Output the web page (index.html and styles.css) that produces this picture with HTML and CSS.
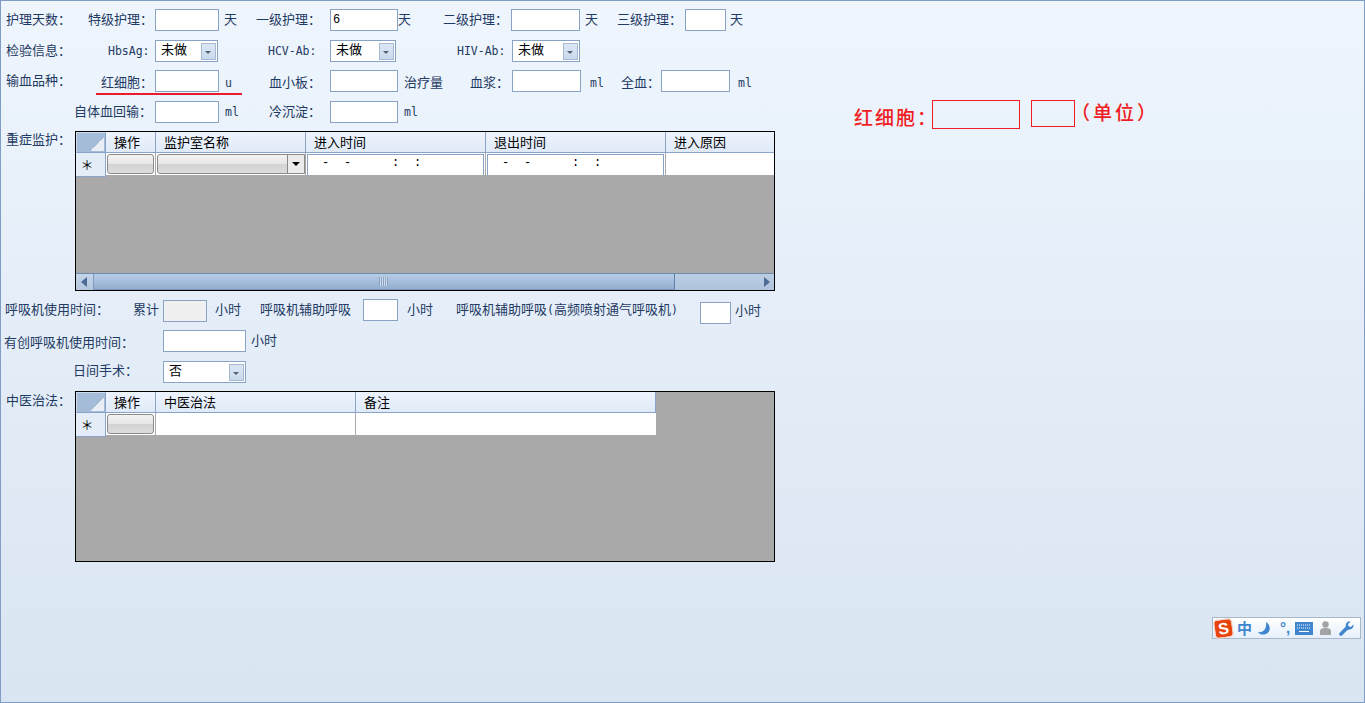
FILE: index.html
```html
<!DOCTYPE html>
<html lang="zh-CN">
<head>
    <meta charset="UTF-8">
    <title>护理信息</title>
    <link rel="stylesheet" href="styles.css">
</head>
<body>
<div class="page">
    <form class="form">
        <div class="row row-care">
            <span>护理天数：</span>
            <span>特级护理：</span><input class="box" type="text"><span class="unit">天</span>
            <span>一级护理：</span><input class="box" type="text" value="6"><span class="unit tight">天</span>
            <span>二级护理：</span><input class="box" type="text"><span class="unit">天</span>
            <span>三级护理：</span><input class="box" type="text"><span class="unit near">天</span>
        </div>
        <div class="row row-check">
            <span>检验信息：</span>
            <span><b class="en">HbsAg:</b></span><div class="combo">未做<i class="drop"></i></div><span></span>
            <span><b class="en">HCV-Ab:</b></span><div class="combo">未做<i class="drop"></i></div><span></span>
            <span><b class="en">HIV-Ab:</b></span><div class="combo">未做<i class="drop"></i></div>
        </div>
        <div class="row row-blood">
            <span class="sect">输血品种：</span>
            <span>红细胞：</span><input class="box" type="text"><span class="unit wide"><b class="en">u</b></span>
            <span>血小板：</span><input class="box" type="text"><span class="unit wide">治疗量</span>
            <span>血浆：</span><input class="box" type="text"><span class="unit far"><b class="en">ml</b></span>
            <span>全血：</span><input class="box" type="text"><span class="unit mid"><b class="en">ml</b></span>
        </div>
        <div class="row row-blood2">
            <span></span>
            <span>自体血回输：</span><input class="box" type="text"><span class="unit wide"><b class="en">ml</b></span>
            <span>冷沉淀：</span><input class="box" type="text"><span class="unit wide"><b class="en">ml</b></span>
        </div>

        <div class="grid-row grid-row-icu">
            <span class="sect">重症监护：</span>
            <div class="grid grid-icu">
                <div class="line head">
                    <div class="corner"></div><div>操作</div><div>监护室名称</div><div>进入时间</div><div>退出时间</div><div>进入原因</div>
                </div>
                <div class="line body">
                    <div class="star">＊</div>
                    <div class="cell-btn"><button class="btn" type="button"></button></div>
                    <div class="cell-btn"><div class="btn btn-combo"><i class="drop-black"></i></div></div>
                    <div class="cell-date"><div class="date"><span>-</span><span>-</span><span class="time">:</span><span>:</span></div></div>
                    <div class="cell-date"><div class="date"><span>-</span><span>-</span><span class="time">:</span><span>:</span></div></div>
                    <div></div>
                </div>
                <div class="fill"></div>
                <div class="hscroll">
                    <div class="arrow arrow-left"></div>
                    <div class="thumb"><i class="grip"></i></div>
                    <div class="track"><i class="arrow-right"></i></div>
                </div>
            </div>
        </div>

        <div class="row row-vent">
            <span>呼吸机使用时间：</span>
            <span>累计</span><input class="box off" type="text" disabled><span class="unit mid">小时</span>
            <span>呼吸机辅助呼吸</span><input class="box" type="text"><span class="unit far">小时</span>
            <span>呼吸机辅助呼吸<b class="en">(</b>高频喷射通气呼吸机<b class="en">)</b></span><input class="box low" type="text"><span class="unit near">小时</span>
        </div>
        <div class="row row-vent2">
            <span>有创呼吸机使用时间：</span><input class="box" type="text"><span class="unit">小时</span>
        </div>
        <div class="row row-day">
            <span></span>
            <span class="day-label">日间手术：</span><div class="combo">否<i class="drop"></i></div>
        </div>

        <div class="grid-row grid-row-tcm">
            <span class="sect">中医治法：</span>
            <div class="grid grid-tcm">
                <div class="line head">
                    <div class="corner"></div><div>操作</div><div>中医治法</div><div>备注</div>
                </div>
                <div class="line body">
                    <div class="star">＊</div>
                    <div class="cell-btn"><button class="btn" type="button"></button></div>
                    <div></div>
                    <div></div>
                </div>
                <div class="fill"></div>
            </div>
        </div>
    </form>

    <!-- red marks lying over the form -->
    <div class="red-line"></div>
    <div class="note">
        <span class="note-label">红细胞：</span>
        <div class="note-box"></div>
        <div class="note-box note-box-small"></div>
        <span class="note-unit">（单位）</span>
    </div>

    <div class="ime">
        <span class="ime-logo">S</span>
        <span class="ime-zh">中</span>
        <svg class="ime-moon" width="13" height="13" viewBox="0 0 13 13"><path d="M8 0C13 3 13 10 8 12 5 13 2 13 0 10 3 10.500 6 9.500 7 7 8 5 8.500 2 8 0z" fill="#3f86cf"/></svg>
        <span class="ime-punct">°,</span>
        <svg class="ime-keys" width="18" height="13" viewBox="0 0 18 13"><rect width="18" height="13" fill="#3f86cf"/><path d="M2 3h14M2 6h14" stroke="#fff" stroke-dasharray="1 1"/><path d="M4 9.500h10" stroke="#fff"/></svg>
        <svg class="ime-user" width="11" height="14" viewBox="0 0 11 14"><circle cx="5.500" cy="3.500" r="3.200" fill="#a3a3a3"/><path d="M0 14V10c0-2 2-3 5.500-3s5.500 1 5.500 3v4z" fill="#a3a3a3"/></svg>
        <svg class="ime-tool" width="15" height="15" viewBox="0 0 15 15"><path d="M2 13 8 7" stroke="#3f86cf" stroke-width="3.600" stroke-linecap="round"/><path d="M14.500 3.500 11.800 6 9.500 5.200 9 3l2.500-2.600C8.500 0 6.200 2.500 6.800 5.500l1.500 3c3.500 1 6.800-1.300 6.200-5z" fill="#3f86cf"/></svg>
    </div>
</div>
</body>
</html>
```

FILE: styles.css
```css
*{
    box-sizing: border-box;
}
html, body{
    margin: 0;
    height: 100%;
}
body{
    font-family: "Noto Sans CJK SC", "Liberation Sans", sans-serif;
    font-size: 13px;
    color: #1f3a63;
    overflow: hidden;
}
.page{
    position: relative;
    height: 703px;
    border: 1px solid #7f9dc5;
    background: linear-gradient(#eef5fd, #d9e5f2);
}
.form{
    padding: 8px 0 0 5px;
}
.en{
    font-family: "DejaVu Sans Mono", monospace;
    font-size: 11.5px;
    font-weight: normal;
}

/* form rows */
.row{
    display: grid;
    align-items: start;
    line-height: 20px;
    white-space: nowrap;
}
.row-care{
    height: 31px;
    grid-template-columns: 82px 67px 64px 37px 74px 68px 45px 68px 69px 37px 68px 41px auto;
}
.row-check{
    height: 30px;
    grid-template-columns: 102px 47px 63px 50px 62px 66px 61px 55px 68px;
}
.row-blood{
    height: 31px;
    grid-template-columns: 95px 54px 64px 50px 61px 68px 72px 42px 69px 40px 40px 69px auto;
}
.row-blood > span{
    padding-top: 2px;
}
.row-blood > .sect{
    padding-top: 0;
}
.row-blood2{
    height: 30px;
    grid-template-columns: 68px 81px 64px 50px 61px 68px auto;
}
.row-vent{
    height: 31px;
    margin-left: -1px;
    grid-template-columns: 128px 30px 44px 53px 103px 35px 58px 244px 31px auto;
}
.row-vent .off{
    margin-top: 1px;
}
.row-vent .low{
    margin-top: 3px;
}
.row-vent .unit.near{
    padding-top: 1px;
}
.row-vent2{
    height: 31px;
    margin-left: -2px;
    grid-template-columns: 159px 83px auto;
}
.row-vent2 > span:first-child{
    padding-top: 2px;
}
.row-day{
    height: 30px;
    grid-template-columns: 67px 90px 83px;
}
.day-label{
    margin-top: -1px;
}
.unit{
    padding-left: 5px;
}
.unit.tight{
    padding-left: 0;
}
.unit.near{
    padding-left: 4px;
}
.unit.wide{
    padding-left: 6px;
}
.unit.mid{
    padding-left: 8px;
}
.unit.far{
    padding-left: 9px;
}

/* inputs */
.box, .combo{
    display: block;
    width: 100%;
    height: 22px;
    margin: 0;
    border: 1px solid #89a3c4;
    border-radius: 0;
    background: #fff;
    font-family: "Liberation Mono", monospace;
    font-size: 12px;
    color: #000;
    outline: none;
}
.box{
    padding: 0 2px;
}
.off{
    background: #f0f0f0;
}
.combo{
    position: relative;
    padding-left: 5px;
    font-family: "Noto Sans CJK SC", sans-serif;
    font-size: 13px;
    line-height: 15px;
}
.drop{
    position: absolute;
    top: 2px;
    right: 1px;
    width: 15px;
    height: 17px;
    border: 1px solid #a7b9d0;
    background: linear-gradient(#dbe6f4, #c9daee);
}
.drop::after{
    content: "";
    position: absolute;
    top: 7px;
    left: 3px;
    border: 3px solid transparent;
    border-top: 3px solid #55606e;
    border-bottom: 0;
}

/* data grids */
.grid-row{
    display: grid;
    grid-template-columns: 69px 700px;
    line-height: 16px;
}
.grid-row-icu{
    margin-bottom: 8px;
}
.grid-row-tcm .sect{
    padding-top: 1px;
}
.grid{
    display: flex;
    flex-direction: column;
    border: 1px solid #000;
    background: #a9a9a9;
    color: #000;
}
.grid-icu{
    height: 160px;
}
.grid-tcm{
    height: 171px;
}
.line{
    display: grid;
    flex: none;
}
.grid-icu .line{
    grid-template-columns: 30px 50px 150px 180px 180px 108px;
}
.grid-tcm .line{
    width: 580px;
    grid-template-columns: 30px 50px 200px 300px;
}
.head{
    height: 21px;
    line-height: 19px;
    background: linear-gradient(#eef4fe, #dfe9f7);
}
.head > div{
    padding-left: 8px;
    border-right: 1px solid #8aa4c8;
    border-bottom: 1px solid #8aa4c8;
}
.head > div:last-child{
    border-right: 0;
}
.grid-tcm .head > div:last-child{
    border-right: 1px solid #8aa4c8;
}
.head > .corner{
    border: 1px solid #cfdcee;
    border-right: 1px solid #8aa4c8;
    border-bottom: 1px solid #8aa4c8;
    background: linear-gradient(to bottom right, transparent 50%, #e9eef5 50%) no-repeat right 1px bottom 1px / 14px 14px, #a5bcd8;
}
.body{
    height: 22px;
    background: #fff;
}
.body > div{
    border-right: 1px solid #a9a9a9;
}
.body > div:last-child{
    border-right: 0;
}
.body > .star{
    padding-right: 7px;
    background: #e4ecf8;
    border-right: 1px solid #8aa4c8;
    border-bottom: 1px solid #8aa4c8;
    line-height: 23px;
    text-align: center;
}
.cell-btn{
    padding: 1px 0 1px 1px;
}
.btn{
    display: block;
    position: relative;
    width: 100%;
    height: 20px;
    padding: 0;
    border: 1px solid #8b8b8b;
    border-radius: 3px;
    background: linear-gradient(#f3f3f3, #e6e6e6 50%, #d2d2d2 50%, #dcdcdc);
}
.body .cell-btn:nth-child(2){
    padding-right: 1px;
}
.btn-combo{
    border-radius: 3px 0 0 3px;
}
.drop-black{
    position: absolute;
    top: 0;
    right: 0;
    width: 17px;
    height: 18px;
    border-left: 1px solid #888;
    background: #ececec;
}
.drop-black::after{
    content: "";
    position: absolute;
    top: 7px;
    left: 4px;
    border: 4px solid transparent;
    border-top: 4px solid #000;
    border-bottom: 0;
}
.cell-date{
    padding: 1px 1px 0;
}
.date{
    display: flex;
    height: 21px;
    padding-left: 14px;
    border: 1px solid #89a3c4;
    border-bottom: 0;
    font-family: "Liberation Mono", monospace;
    font-size: 12px;
    line-height: 17px;
}
.date span{
    width: 22px;
}
.date .time{
    margin-left: 26px;
}
.fill{
    flex: 1;
}
.hscroll{
    display: flex;
    flex: none;
    height: 17px;
    border-top: 1px solid #6d8aab;
}
.arrow{
    position: relative;
    width: 18px;
    border-right: 1px solid #7f9cc0;
    background: linear-gradient(#c5d6ea, #b2c6de);
}
.arrow-left::after{
    content: "";
    position: absolute;
    top: 3px;
    left: 5px;
    border: 5px solid transparent;
    border-right: 6px solid #4f6a95;
    border-left: 0;
}
.thumb{
    position: relative;
    width: 581px;
    border-right: 1px solid #5f80a8;
    border-bottom: 1px solid #7a97bb;
    background: linear-gradient(#b6cde8, #93aecf);
}
.grip{
    position: absolute;
    top: 3px;
    left: 285px;
    width: 9px;
    height: 9px;
    background: repeating-linear-gradient(to right, #8ba3c2 0 1px, #cfdcec 1px 2px);
}
.track{
    position: relative;
    flex: 1;
    background: linear-gradient(#bccee4, #aec3dc);
}
.arrow-right{
    position: absolute;
    top: 3px;
    right: 4px;
    border: 5px solid transparent;
    border-left: 6px solid #4f6a95;
    border-right: 0;
}

/* red marks */
.red-line{
    position: absolute;
    top: 92px;
    left: 95px;
    width: 146px;
    height: 2px;
    background: #ea1c2c;
}
.note{
    position: absolute;
    top: 99px;
    left: 853px;
    display: flex;
    align-items: flex-start;
    color: #f01d24;
    font-size: 19px;
    font-weight: 500;
    white-space: nowrap;
}
.note-label{
    width: 78px;
    letter-spacing: 2px;
    line-height: 34px;
}
.note-box{
    flex: none;
    width: 88px;
    height: 29px;
    border: 1px solid #f01d24;
}
.note-box-small{
    width: 44px;
    height: 27px;
    margin-left: 11px;
}
.note-unit{
    margin-left: -4px;
    letter-spacing: 3px;
    line-height: 24px;
}

/* input method bar */
.ime{
    position: absolute;
    top: 616px;
    left: 1211px;
    display: flex;
    align-items: center;
    width: 149px;
    height: 22px;
    border: 1px solid #a8b8c8;
    background: linear-gradient(#fff, #e6f0fb);
}
.ime-logo{
    width: 17px;
    height: 17px;
    margin-left: 2px;
    border-radius: 3px;
    outline: 1px solid #f4d2c4;
    background: #e8430f;
    color: #fff;
    font-family: "Liberation Sans", sans-serif;
    font-size: 16px;
    font-weight: bold;
    line-height: 17px;
    text-align: center;
    transform: rotate(-8deg);
}
.ime-zh{
    margin-left: 5px;
    color: #3f86cf;
    font-size: 15px;
    font-weight: bold;
    line-height: 20px;
}
.ime-moon{
    margin-left: 6px;
}
.ime-punct{
    width: 14px;
    margin-left: 9px;
    color: #3f86cf;
    font-family: "Liberation Sans", sans-serif;
    font-size: 15px;
    font-weight: bold;
    line-height: 20px;
}
.ime-keys{
    margin-left: 1px;
}
.ime-user{
    margin-left: 7px;
}
.ime-tool{
    margin-left: 8px;
}
```
